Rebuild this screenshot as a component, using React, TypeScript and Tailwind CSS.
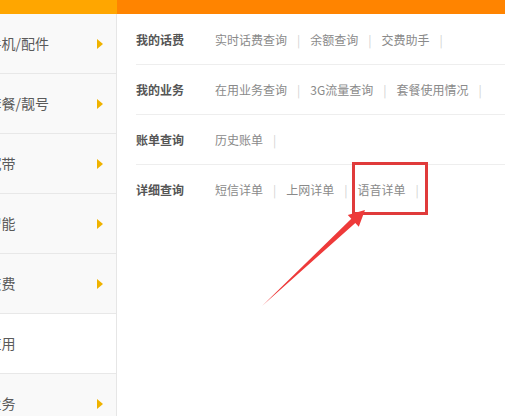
import React from "react";

const sideItems: { text: string; arrow: boolean; white?: boolean }[] = [
  { text: "手机/配件", arrow: true },
  { text: "套餐/靓号", arrow: true },
  { text: "宽带", arrow: true },
  { text: "智能", arrow: true },
  { text: "交费", arrow: true },
  { text: "应用", arrow: false, white: true },
  { text: "业务", arrow: true },
];

const rows: { label: string; links: string[] }[] = [
  { label: "我的话费", links: ["实时话费查询", "余额查询", "交费助手"] },
  { label: "我的业务", links: ["在用业务查询", "3G流量查询", "套餐使用情况"] },
  { label: "账单查询", links: ["历史账单"] },
  { label: "详细查询", links: ["短信详单", "上网详单", "语音详单"] },
];

export default function App() {
  return (
    <div
      className="relative w-[505px] h-[416px] overflow-hidden bg-white"
      style={{ fontFamily: '"Microsoft YaHei", "Noto Sans CJK SC", "Noto Sans", sans-serif' }}
    >
      <div className="flex h-[14px]">
        <div className="w-[117px] bg-[#ffa600]" />
        <div className="flex-1 bg-[#ff8400]" />
      </div>
      <div className="flex h-[402px]">
        <aside className="w-[117px] shrink-0 border-r border-[#e6e6e6] bg-[#f9f9f9] overflow-hidden">
          {sideItems.map((it) => (
            <div
              key={it.text}
              className={`h-[60px] border-b border-[#e8e8e8] flex items-center justify-between pr-[13px] ${it.white ? "bg-white" : ""}`}
            >
              <span className="ml-[-12.5px] text-[14px] text-[#5a5a5a] whitespace-nowrap">{it.text}</span>
              {it.arrow && (
                <span className="w-0 h-0 border-y-[5px] border-y-transparent border-l-[6px] border-l-[#efb200]" />
              )}
            </div>
          ))}
        </aside>
        <main className="flex-1 pt-[1px] pl-[19px]">
          {rows.map((r, i) => (
            <div
              key={r.label}
              className={`h-[50px] flex items-center text-[12px] whitespace-nowrap ${i < rows.length - 1 ? "border-b border-[#eeeeee]" : ""}`}
            >
              <span className="w-[79px] shrink-0 font-bold text-[#555]">{r.label}</span>
              {r.links.map((l) => (
                <React.Fragment key={l}>
                  <span className="text-[#8a8a8a]">{l}</span>
                  <span className="mx-[10px] text-[#d2d2d2]">|</span>
                </React.Fragment>
              ))}
            </div>
          ))}
        </main>
      </div>

      <div className="absolute left-[352px] top-[162px] w-[76px] h-[53px] border-[3px] border-[#e03b3b]" />
      <svg className="absolute left-0 top-0" width="505" height="416" viewBox="0 0 505 416">
        <polygon
          points="262,306 351.3,218.7 347.8,215.1 365,210 358.8,226.7 355.3,223.1"
          fill="#ee3a3a"
        />
      </svg>
    </div>
  );
}
